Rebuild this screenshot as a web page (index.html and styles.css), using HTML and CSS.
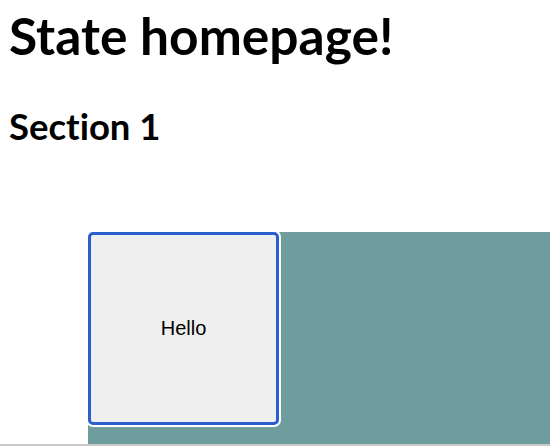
FILE: index.html
```html
<!DOCTYPE html>
<html>
<head>
<meta charset="utf-8">
<link rel="stylesheet" href="styles.css">
</head>
<body>
<div class="page">
  <h1 class="title">State homepage!</h1>
  <h2 class="section">Section 1</h2>
  <div class="stage">
    <button class="tile">Hello</button>
  </div>
  <div class="rule"></div>
</div>
</body>
</html>
```
FILE: styles.css
```css
html, body {
  margin: 0;
  padding: 0;
  background: #ffffff;
  overflow: hidden;
}
.page {
  width: 550px;
  height: 446px;
  display: flex;
  flex-direction: column;
}
.title {
  margin: 0;
  padding: 5px 0 0 9px;
  font-family: Lato, sans-serif;
  font-weight: 700;
  font-size: 51.5px;
  line-height: 60px;
  font-variant-ligatures: none;
  color: #000;
}
.section {
  margin: 39px 0 0 0;
  padding-left: 9px;
  font-family: Lato, sans-serif;
  font-weight: 700;
  font-size: 36.5px;
  line-height: 44px;
  font-variant-ligatures: none;
  color: #000;
}
.stage {
  margin: 84px 0 0 88px;
  height: 212px;
  background: #6f9c9d;
  display: flex;
  align-items: flex-start;
}
.tile {
  width: 191px;
  height: 193px;
  box-sizing: border-box;
  background: #efefef;
  border: 3px solid #2b5fcb;
  border-radius: 5px;
  box-shadow: 0 0 0 2px #ffffff;
  font-family: "Liberation Sans", Arial, sans-serif;
  font-size: 20px;
  color: #000;
  padding: 0;
}
.rule {
  height: 2px;
  background: #c8c8ca;
}
```
